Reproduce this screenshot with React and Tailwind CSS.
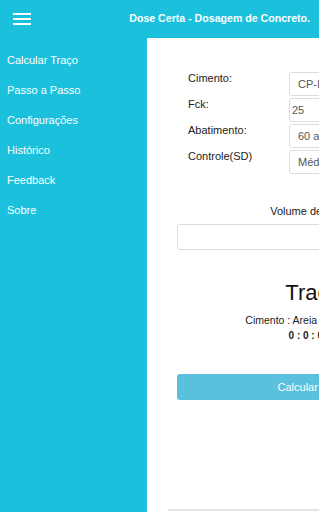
import React from 'react';

const menu = ['Calcular Traço', 'Passo a Passo', 'Configurações', 'Histórico', 'Feedback', 'Sobre'];

const fields = [
    { label: 'Cimento:', value: 'CP-II', pad: 'pl-[8px]' },
    { label: 'Fck:', value: '25', pad: 'pl-[2px]' },
    { label: 'Abatimento:', value: '60 a 100', pad: 'pl-[8px]' },
    { label: 'Controle(SD)', value: 'Médio', pad: 'pl-[8px]' }
];

const App = () => {
    return (
        <div className="w-[319px] h-[512px] overflow-hidden flex flex-col bg-white font-['Liberation_Sans',Arial,sans-serif]">
            {/* Top bar */}
            <div className="h-[38px] shrink-0 bg-[#1ac0dc] flex items-center justify-between pl-[13px] pr-[9px]">
                <div className="flex flex-col gap-[3px] w-[18px]">
                    <span className="h-[2px] bg-white block"></span>
                    <span className="h-[2px] bg-white block"></span>
                    <span className="h-[2px] bg-white block"></span>
                </div>
                <span className="text-white font-bold text-[10.6px] whitespace-nowrap">Dose Certa - Dosagem de Concreto.</span>
            </div>

            <div className="flex flex-1 min-h-0">
                {/* Drawer */}
                <div className="w-[147px] shrink-0 bg-[#1ac0dc] pt-[15px]">
                    {menu.map((item) => (
                        <div key={item} className="h-[30px] pl-[7px] text-white text-[11px] leading-[14px]">
                            {item}
                        </div>
                    ))}
                </div>

                {/* Main content */}
                <div className="w-[332px] shrink-0 px-[30px] pt-[34px]">
                    <div className="flex flex-col gap-[2px] pl-[11px]">
                        {fields.map((f) => (
                            <div key={f.label} className="flex items-start h-[24px]">
                                <span className="w-[101px] shrink-0 text-[11px] leading-[13px] text-[#222]">{f.label}</span>
                                <div className={`flex-1 h-[24px] border border-[#ddd] rounded-[3px] flex items-center ${f.pad} text-[11px] text-[#555] whitespace-nowrap`}>
                                    {f.value}
                                </div>
                            </div>
                        ))}
                    </div>

                    <div className="mt-[30px] text-center text-[11px] leading-[14px] text-[#222] pl-[14px]">Volume de Concreto</div>
                    <div className="mt-[6px] h-[26px] border border-[#ddd] rounded-[3px]"></div>

                    <div className="mt-[30px] text-center text-[22px] leading-[26px] text-[#111]">Traço</div>
                    <div className="mt-[8px] text-center text-[10.5px] leading-[12px] text-[#222]">Cimento : Areia : Brita : Água</div>
                    <div className="mt-[4px] text-center text-[10px] leading-[12px] font-bold text-[#222]">0 : 0 : 0 : 0</div>

                    <button className="mt-[32px] w-full h-[26px] rounded-[3px] bg-[#5bc0de] text-white text-[11px]">Calcular Traço</button>

                    <div className="mt-[109px] -mx-[9px] h-[2px] bg-[#e4e4e4]"></div>
                </div>
            </div>
        </div>
    );
};

export default App;
